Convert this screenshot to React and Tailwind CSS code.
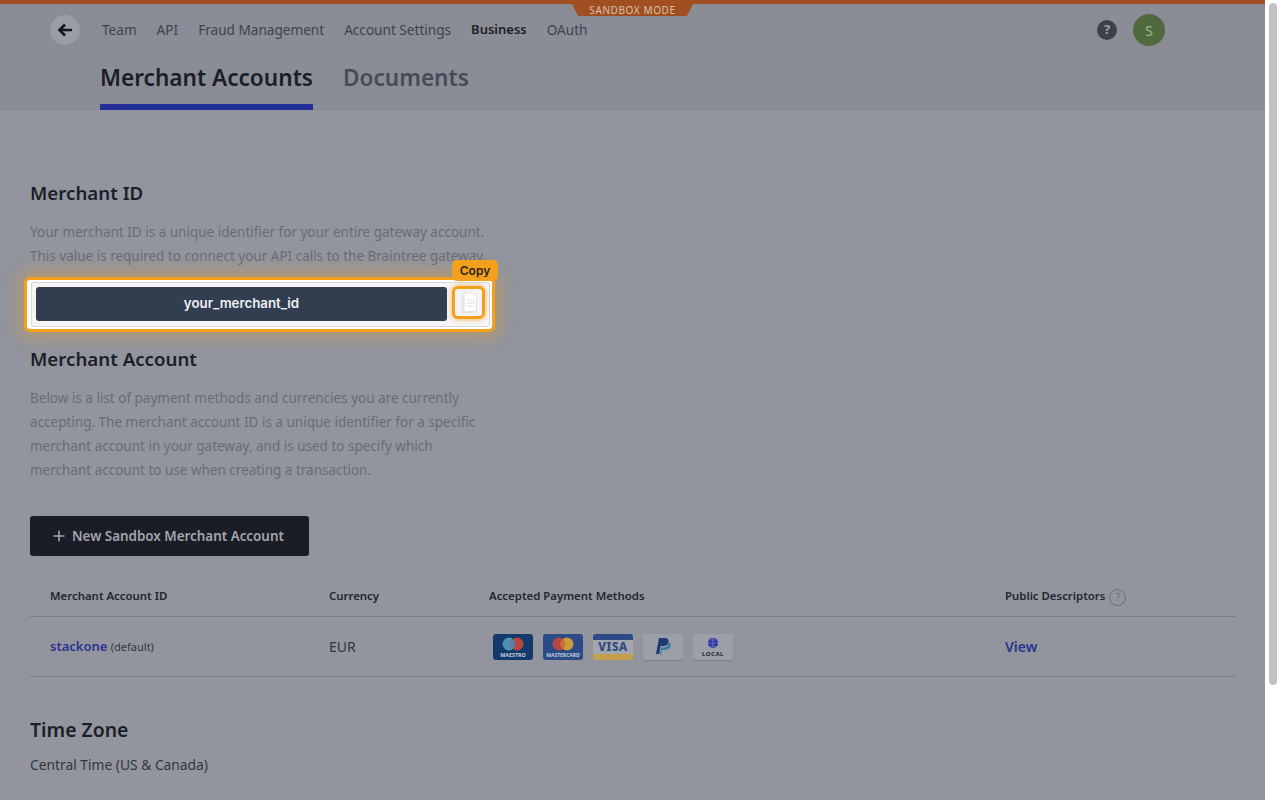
import React from "react";

const sans = "font-['Noto_Sans',sans-serif]";

function Card({ children }) {
  return (
    <svg width="42" height="28" viewBox="0 0 42 28" className="shrink-0">
      {children}
    </svg>
  );
}

function Maestro() {
  return (
    <Card>
      <rect x="1" y="1" width="40" height="26" rx="3" fill="#14396b" />
      <circle cx="17" cy="11" r="6.5" fill="#4d90b4" />
      <circle cx="25" cy="11" r="6.5" fill="#b5473f" />
      <path d="M21 6a6.5 6.5 0 0 1 0 10a6.5 6.5 0 0 1 0-10z" fill="#5d7fa5" />
      <text x="21" y="23.5" textAnchor="middle" fontSize="5.4" fontWeight="700" fill="#c4cbd8" fontFamily="Noto Sans, sans-serif">MAESTRO</text>
    </Card>
  );
}
function Mastercard() {
  return (
    <Card>
      <rect x="1" y="1" width="40" height="26" rx="3" fill="#2b4a87" />
      <circle cx="17" cy="11" r="6.5" fill="#b5473f" />
      <circle cx="25" cy="11" r="6.5" fill="#c79a3a" />
      <path d="M21 6a6.5 6.5 0 0 1 0 10a6.5 6.5 0 0 1 0-10z" fill="#c8703a" />
      <text x="21" y="23.5" textAnchor="middle" fontSize="5" fontWeight="700" fill="#c4cbd8" fontFamily="Noto Sans, sans-serif">MASTERCARD</text>
    </Card>
  );
}
function Visa() {
  return (
    <Card>
      <rect x="1" y="1" width="40" height="26" rx="3" fill="#a3a6ad" />
      <path d="M1 7V4a3 3 0 0 1 3-3h34a3 3 0 0 1 3 3v3z" fill="#2b4a87" />
      <path d="M1 21h40v3a3 3 0 0 1-3 3H4a3 3 0 0 1-3-3z" fill="#c5a04a" />
      <text x="21" y="18" textAnchor="middle" fontSize="11.5" fontWeight="800" letterSpacing=".6" fill="#2f4a85" fontFamily="Noto Sans, sans-serif">VISA</text>
    </Card>
  );
}
function Paypal() {
  return (
    <Card>
      <rect x="1" y="2" width="40" height="26" rx="3" fill="#7f828b" />
      <rect x="1" y="1" width="40" height="26" rx="3" fill="#9c9fa8" />
      <path d="M19 22l1.2-5h3.3c3 0 5-1.8 5.2-4.4.2-2-1-3.2-2.4-3.6.5 3-1.4 5.5-4.8 5.5h-2.2L18 22z" fill="#3a7ba3" />
      <path d="M14 21l3-16h5.5c3 0 4.3 1.5 4 3.7-.4 2.7-2.4 4.3-5.3 4.3h-2.6l-1.4 8z" fill="#1f3a72" />
    </Card>
  );
}
function Local() {
  return (
    <Card>
      <rect x="1" y="2" width="40" height="26" rx="3" fill="#7f828b" />
      <rect x="1" y="1" width="40" height="26" rx="3" fill="#9c9fa8" />
      <circle cx="21" cy="10" r="5" fill="#2330a0" />
      <path d="M16 10h10M21 5v10M18 7h6M18 13h6" stroke="#8f93c6" strokeWidth=".6" />
      <text x="21" y="23" textAnchor="middle" fontSize="6" fontWeight="700" letterSpacing=".5" fill="#23262f" fontFamily="Noto Sans, sans-serif">LOCAL</text>
    </Card>
  );
}

export default function App() {
  return (
    <div className={`${sans} h-[800px] overflow-hidden bg-white flex`}>
      <div className="w-[1265px] h-full bg-[#92959e] flex flex-col shrink-0 overflow-hidden">
        <header className="relative h-[110px] shrink-0 bg-[#8a8d95] border-b border-[#858890] border-t-4 border-t-[#a14f20]">
          <div className="absolute left-[572px] top-0 w-[121px] h-3 bg-[#a14f20] [clip-path:polygon(0_0,100%_0,95%_100%,5%_100%)] flex items-center justify-center">
            <span className="text-[10px] tracking-[0.6px] text-[#d8c0b0] leading-none -mt-px">SANDBOX MODE</span>
          </div>
          <div className="flex items-center h-[52px] pl-[50px]">
            <div className="w-[30px] h-[30px] rounded-full bg-[#9a9da4] flex items-center justify-center">
              <svg width="16" height="14" viewBox="0 0 16 14" fill="none" stroke="#15171f" strokeWidth="2.6">
                <path d="M15 7H3M8 1.5 2.5 7 8 12.5" />
              </svg>
            </div>
            <nav className="flex items-center gap-5 ml-[22px] text-[13.6px] text-[#3f424c]">
              <span>Team</span>
              <span>API</span>
              <span>Fraud Management</span>
              <span>Account Settings</span>
              <span className="text-[13px] font-semibold text-[#1c1f27]">Business</span>
              <span>OAuth</span>
            </nav>
            <div className="ml-auto flex items-center gap-[16px] pr-[100px]">
              <div className="w-5 h-5 rounded-full bg-[#3c404b] flex items-center justify-center text-[13px] font-bold text-[#a2a5ad]">?</div>
              <div className="w-8 h-8 rounded-full bg-[#50693f] flex items-center justify-center text-[14px] text-[#9fb392]">S</div>
            </div>
          </div>
          <div className="flex items-start gap-[30px] pl-[100px] h-[54px]">
            <div className="h-full border-b-[6px] border-[#232f96] text-[22.6px] font-semibold leading-[44px] text-[#1b1e27]">Merchant Accounts</div>
            <div className="text-[22.6px] font-semibold leading-[44px] text-[#484b55]">Documents</div>
          </div>
        </header>

        <main className="pl-[30px] pr-[30px] flex-1 relative">
          <h2 className="mt-[70px] text-[18.7px] font-semibold leading-[26px] text-[#1b1e27]">Merchant ID</h2>
          <p className="mt-[14px] w-[470px] text-[13.5px] leading-[24px] text-[#696c76]">
            Your merchant ID is a unique identifier for your entire gateway account.
            <br />
            This value is required to connect your API calls to the Braintree gateway.
          </p>

          <div className="relative -ml-[6px] mt-[9px] w-[471px] h-[55px] rounded-[6px] bg-white border-[3px] border-[#f3a01c] shadow-[0_0_16px_5px_rgba(243,160,28,0.38)] pl-[4px] pr-[2px] py-[2px]">
            <div className="flex items-start h-[45px] pt-[4px] pl-[4px] pr-[4px] gap-[5px] bg-[#f5f5f6] border border-[#d6d8dc] rounded-[2px]">
              <div className="flex-1 h-[34px] rounded-[3px] bg-[#303e50] flex items-center justify-center font-['Inter',sans-serif] text-[13.3px] font-semibold text-[#eceef2]">
                your_merchant_id
              </div>
              <div className="w-[33px] h-[33px] -mt-px rounded-[6px] border-[3px] border-[#f3a01c] bg-[#f4f4f6] flex items-center justify-center shadow-[0_0_4px_1px_rgba(243,160,28,0.6)]">
                <svg width="18" height="22" viewBox="0 0 18 22" fill="none" stroke="#dfe0e4" strokeWidth="1">
                  <path d="M2.5 2v18.5H14" />
                  <path d="M4 .8h8.5l4 4v14.4H4z" fill="#fff" />
                  <path d="M6.5 8h8M6.5 11h8M6.5 14h8" />
                </svg>
              </div>
            </div>
            <div className="absolute right-[-6px] top-[-20px] h-[21px] w-[46px] rounded-[5px] bg-[#f3a01c] flex items-center justify-center font-['Inter',sans-serif] text-[12px] font-semibold text-[#2b2313]">
              Copy
            </div>
          </div>

          <h2 className="mt-[14px] text-[18.7px] font-semibold leading-[26px] text-[#1b1e27]">Merchant Account</h2>
          <p className="mt-[14px] w-[455px] text-[13.5px] leading-[24px] text-[#696c76]">
            Below is a list of payment methods and currencies you are currently accepting. The merchant account ID is a unique identifier for a specific merchant account in your gateway, and is used to specify which merchant account to use when creating a transaction.
          </p>

          <button className="mt-[34px] w-[279px] h-10 rounded-[3px] bg-[#1a1d26] flex items-center pl-[23px] gap-[7px] text-[13.4px] font-semibold text-[#a2a5ad]">
            <svg width="12" height="12" viewBox="0 0 12 12" stroke="#a2a5ad" strokeWidth="1.6">
              <path d="M6 .5v11M.5 6h11" />
            </svg>
            New Sandbox Merchant Account
          </button>

          <div className="mt-[20px] w-[1205px]">
            <div className="grid grid-cols-[279px_160px_516px_1fr] pl-5 h-[41px] items-center border-b border-[#7b7e87] text-[11.4px] font-semibold text-[#23262f]">
              <span>Merchant Account ID</span>
              <span>Currency</span>
              <span>Accepted Payment Methods</span>
              <span className="flex items-center gap-1">
                Public Descriptors
                <span className="w-[17px] h-[17px] mt-[2px] rounded-full border border-[#6a6d77] flex items-center justify-center text-[10px] font-normal text-[#6a6d77]">?</span>
              </span>
            </div>
            <div className="grid grid-cols-[279px_160px_516px_1fr] pl-5 h-[60px] items-center border-b border-[#7b7e87]">
              <span className="text-[13px] font-semibold text-[#2a3390] pt-px">
                stackone <span className="text-[11px] font-normal text-[#33363f]">(default)</span>
              </span>
              <span className="text-[14px] text-[#33363f]">EUR</span>
              <span className="flex items-center gap-2 ml-[3px]">
                <Maestro />
                <Mastercard />
                <Visa />
                <Paypal />
                <Local />
              </span>
              <span className="text-[14px] font-semibold text-[#2a3390]">View</span>
            </div>
          </div>

          <h2 className="mt-[39px] text-[19.4px] font-semibold leading-[28px] text-[#1b1e27]">Time Zone</h2>
          <p className="mt-[9px] text-[13.8px] leading-[24px] text-[#33363f]">Central Time (US &amp; Canada)</p>
        </main>
      </div>
      <div className="w-[15px] h-full bg-white pt-[3px] pl-[4px]">
        <div className="w-[8px] h-[682px] rounded-full bg-[#c2c2c2]" />
      </div>
    </div>
  );
}
